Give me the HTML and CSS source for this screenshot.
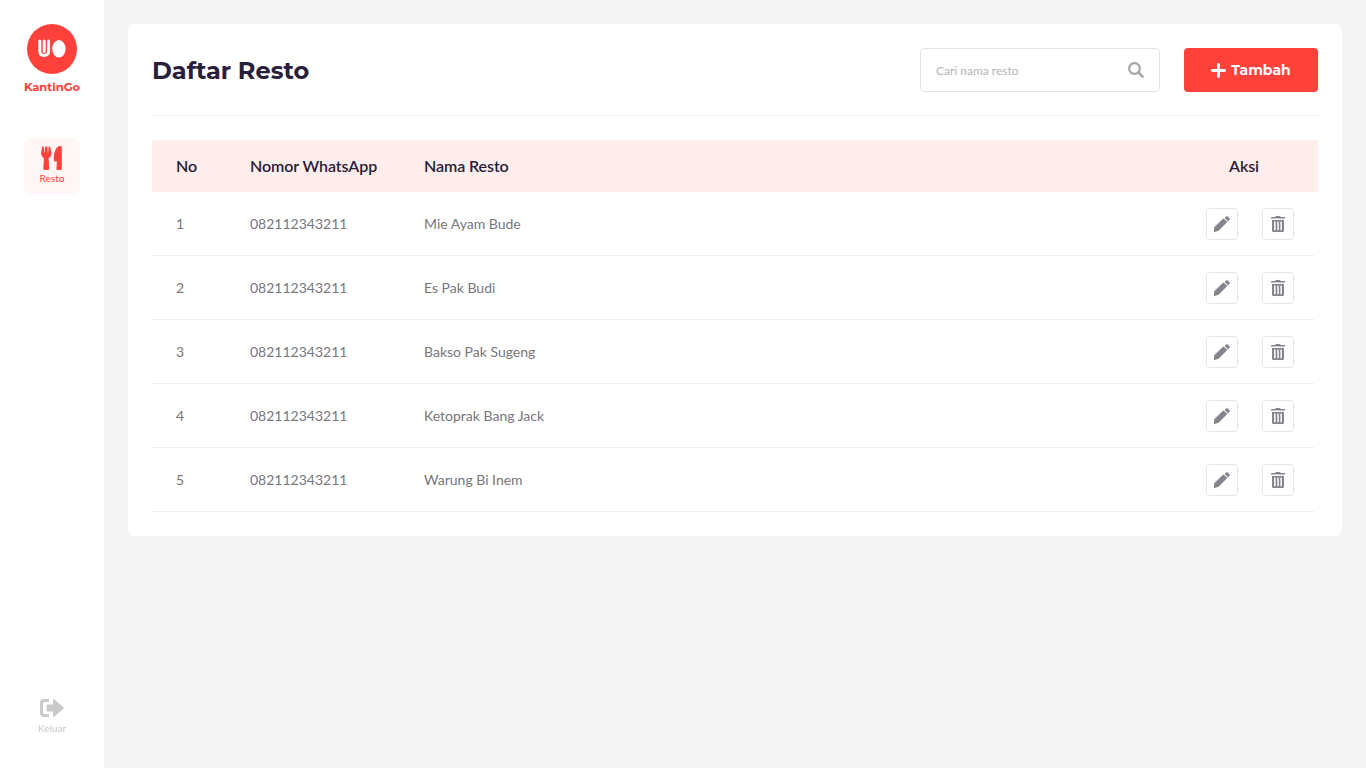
FILE: index.html
```html
<!DOCTYPE html>
<html lang="id">
<head>
    <meta charset="UTF-8">
    <meta name="viewport" content="width=device-width, initial-scale=1.0">
    <title>KantinGo - Daftar Resto</title>
    <link rel="stylesheet" href="styles.css">
</head>
<body>

    <!-- Icon yang dipakai berulang di tabel -->
    <svg class="sprite" xmlns="http://www.w3.org/2000/svg">
        <symbol id="icon-edit" viewBox="0 0 16 16">
            <path d="M9.9 2.7 13.3 6.1 4.8 14.6 .7 15.9Q0 16 0 15.3L.1 11.8Q.1 11.4 .5 11L9 2.7Q9.5 2.3 9.9 2.7ZM10.6 2 12.2 .4Q13 -.2 13.8 .5L15.5 2.2Q16.2 3 15.6 3.8L14 5.4Z"/>
        </symbol>
        <symbol id="icon-delete" viewBox="0 0 14 16">
            <path d="M0 1.4Q0 1 .5 1H4.2L4.7.3Q4.9 0 5.3 0H8.7Q9.1 0 9.3.3L9.8 1H13.5Q14 1 14 1.4V2.2Q14 2.6 13.5 2.6H.5Q0 2.6 0 2.2Z"/>
            <path fill-rule="evenodd" d="M1 4H13V14.5Q13 16 11.5 16H2.5Q1 16 1 14.5ZM3.1 5.4V14.2H4.6V5.4ZM6.25 5.4V14.2H7.75V5.4ZM9.4 5.4V14.2H10.9V5.4Z"/>
        </symbol>
    </svg>

    <div class="layout">
        <aside class="sidebar">
            <div class="brand">
                <svg class="brand-logo" viewBox="0 0 50 50">
                    <circle cx="25" cy="25" r="25" fill="#ff403b"/>
                    <path d="M12.8 17V27Q12.8 31.4 17.2 31.4T21.6 27V17M17.2 17V27.6" fill="none" stroke="#fff" stroke-width="3" stroke-linecap="round"/>
                    <ellipse cx="31.9" cy="24.8" rx="6.7" ry="8.7" fill="#fff"/>
                </svg>
                <span class="brand-name">KantinGo</span>
            </div>

            <a class="menu-item active">
                <svg width="22" height="24" viewBox="0 0 22 24">
                    <path d="M1.2.7Q2 .2 2.8.8L3.2 6.6H3.7L4.1.8Q5.2.1 6.3.8L6.7 6.6H7.2L7.6.8Q8.4.2 9.2.7L10.4 7.3Q10.6 10.6 7.6 12.2L8.2 22.4Q8.2 24 6.7 24H3.8Q2.2 24 2.3 22.4L2.9 12.2Q-.1 10.6.1 7.3Z"/>
                    <path d="M19.3 0Q20.8 0 20.8 1.2V22.5Q20.8 24 19.3 24H16.9Q15.3 24 15.4 22.4L16 15.4H14Q13 15.4 13 14.4C12.3 7 15 0 19.3 0Z"/>
                </svg>
                <span>Resto</span>
            </a>

            <a class="menu-item logout">
                <svg width="24" height="18" viewBox="0 0 24 18">
                    <path d="M9 1.6H4.2Q1.5 1.6 1.5 4.3V13.7Q1.5 16.4 4.2 16.4H9" fill="none" stroke="currentColor" stroke-width="3"/>
                    <path d="M6.5 6.7Q6.5 5.5 7.7 5.5H13V1.3Q13.2-.3 14.6.4L23.5 8.2Q24.2 9 23.5 9.8L14.6 17.6Q13.2 18.3 13 16.7V12.5H7.7Q6.5 12.5 6.5 11.3Z"/>
                </svg>
                <span>Keluar</span>
            </a>
        </aside>

        <main class="content">
            <div class="card">
                <div class="card-header">
                    <h1>Daftar Resto</h1>
                    <div class="search">
                        <input type="text" placeholder="Cari nama resto">
                        <svg width="16" height="16" viewBox="0 0 16 16">
                            <circle cx="6.5" cy="6.5" r="5.4" fill="none" stroke="currentColor" stroke-width="2.2"/>
                            <path d="M10.5 10.5 14.6 14.6" stroke="currentColor" stroke-width="2.6" stroke-linecap="round"/>
                        </svg>
                    </div>
                    <button class="btn-add">
                        <svg width="15" height="15" viewBox="0 0 15 15">
                            <path d="M7.5 1.4V13.6M1.4 7.5H13.6" stroke="#fff" stroke-width="2.8" stroke-linecap="round"/>
                        </svg>
                        <span>Tambah</span>
                    </button>
                </div>

                <div class="table">
                    <div class="row head">
                        <span>No</span>
                        <span>Nomor WhatsApp</span>
                        <span>Nama Resto</span>
                        <span class="head-action">Aksi</span>
                    </div>
                    <div class="row">
                        <span>1</span>
                        <span>082112343211</span>
                        <span>Mie Ayam Bude</span>
                        <div class="actions">
                            <button class="btn-icon"><svg width="16" height="16"><use href="#icon-edit"/></svg></button>
                            <button class="btn-icon"><svg width="14" height="16"><use href="#icon-delete"/></svg></button>
                        </div>
                    </div>
                    <div class="row">
                        <span>2</span>
                        <span>082112343211</span>
                        <span>Es Pak Budi</span>
                        <div class="actions">
                            <button class="btn-icon"><svg width="16" height="16"><use href="#icon-edit"/></svg></button>
                            <button class="btn-icon"><svg width="14" height="16"><use href="#icon-delete"/></svg></button>
                        </div>
                    </div>
                    <div class="row">
                        <span>3</span>
                        <span>082112343211</span>
                        <span>Bakso Pak Sugeng</span>
                        <div class="actions">
                            <button class="btn-icon"><svg width="16" height="16"><use href="#icon-edit"/></svg></button>
                            <button class="btn-icon"><svg width="14" height="16"><use href="#icon-delete"/></svg></button>
                        </div>
                    </div>
                    <div class="row">
                        <span>4</span>
                        <span>082112343211</span>
                        <span>Ketoprak Bang Jack</span>
                        <div class="actions">
                            <button class="btn-icon"><svg width="16" height="16"><use href="#icon-edit"/></svg></button>
                            <button class="btn-icon"><svg width="14" height="16"><use href="#icon-delete"/></svg></button>
                        </div>
                    </div>
                    <div class="row">
                        <span>5</span>
                        <span>082112343211</span>
                        <span>Warung Bi Inem</span>
                        <div class="actions">
                            <button class="btn-icon"><svg width="16" height="16"><use href="#icon-edit"/></svg></button>
                            <button class="btn-icon"><svg width="14" height="16"><use href="#icon-delete"/></svg></button>
                        </div>
                    </div>
                </div>
            </div>
        </main>
    </div>

</body>
</html>
```

FILE: styles.css
```css
* {
    box-sizing: border-box;
}
body {
    margin: 0;
    font-family: Lato, sans-serif;
    background-color: #f5f5f5;
    color: #77767e;
}
svg {
    display: block;
    fill: currentColor;
}
.sprite {
    display: none;
}
.layout {
    display: flex;
    height: 100vh;
}

/* Sidebar */
.sidebar {
    width: 104px;
    padding: 24px 0 32px;
    background-color: #fff;
    display: flex;
    flex-direction: column;
    align-items: center;
}
.brand {
    display: flex;
    flex-direction: column;
    align-items: center;
    margin-bottom: 43px;
}
.brand-logo {
    width: 50px;
    height: 50px;
}
.brand-name {
    margin-top: 5px;
    font: 700 11.5px/16px Montserrat, Inter, sans-serif;
    color: #ff403b;
}
.menu-item {
    width: 56px;
    height: 56px;
    border-radius: 8px;
    display: flex;
    flex-direction: column;
    align-items: center;
    justify-content: center;
    font-size: 10px;
    line-height: 12px;
}
.menu-item.active {
    padding-bottom: 2px;
    background-color: #fff6f5;
    color: #ff403b;
}
.menu-item.active span {
    margin-top: 2px;
}
.logout {
    margin-top: auto;
    height: 40px;
    color: #c9c9cc;
}
.logout span {
    margin-top: 5px;
}

/* Konten */
.content {
    flex: 1;
    padding: 24px;
}
.card {
    background-color: #fff;
    border-radius: 8px;
    padding: 24px;
}
.card-header {
    height: 68px;
    padding-bottom: 23px;
    margin-bottom: 24px;
    border-bottom: 1px solid #f2f2f2;
    display: flex;
    align-items: center;
}
h1 {
    margin: 0 auto 0 0;
    padding-top: 1px;
    font: 700 24px/43px Montserrat, Inter, sans-serif;
    color: #28203a;
}
.search {
    width: 240px;
    height: 44px;
    padding: 0 15px;
    border: 1px solid #e4e4e6;
    border-radius: 4px;
    display: flex;
    align-items: center;
    color: #a5a5aa;
}
.search input {
    flex: 1;
    min-width: 0;
    padding: 0;
    border: none;
    outline: none;
    font-family: inherit;
    font-size: 12px;
}
.search input::placeholder {
    color: #b4b4b8;
}
.btn-add {
    width: 134px;
    height: 44px;
    margin-left: 24px;
    padding: 0;
    border: none;
    border-radius: 4px;
    background-color: #ff403b;
    color: #fff;
    font: 700 14px/20px Montserrat, Inter, sans-serif;
    display: flex;
    align-items: center;
    justify-content: center;
    gap: 5px;
    cursor: pointer;
}

/* Tabel */
.row {
    display: grid;
    grid-template-columns: 74px 174px 1fr 88px;
    align-items: center;
    height: 64px;
    margin-right: 4px;
    padding: 0 20px 0 24px;
    border-bottom: 1px solid #efeff0;
    font-size: 14px;
}
.row.head {
    height: 52px;
    margin-right: 0;
    padding-right: 24px;
    padding-bottom: 2px;
    border-bottom: none;
    background-color: #ffeeec;
    color: #28203a;
    font-size: 16px;
    font-weight: 600;
    letter-spacing: -0.08px;
}
.head-action {
    padding-right: 12px;
    text-align: center;
}
.actions {
    display: flex;
    gap: 24px;
}
.btn-icon {
    width: 32px;
    height: 32px;
    padding: 0;
    border: 1px solid #e6e6e8;
    border-radius: 4px;
    background-color: #fff;
    color: #85848d;
    display: flex;
    align-items: center;
    justify-content: center;
    cursor: pointer;
}
```
